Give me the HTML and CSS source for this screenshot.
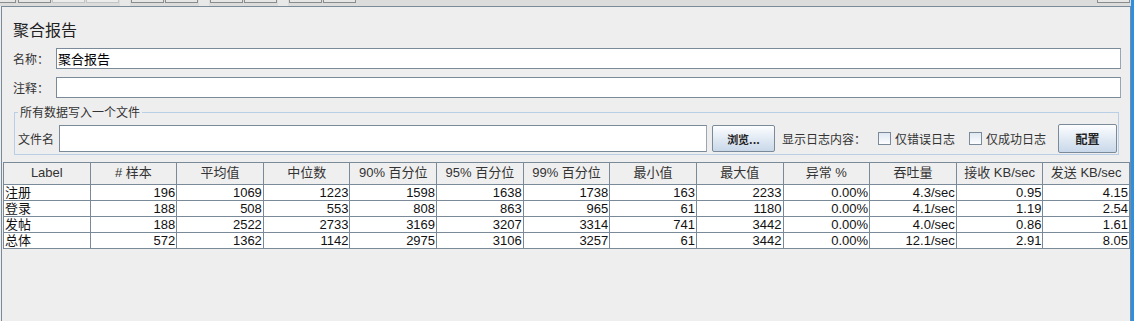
FILE: index.html
```html
<!DOCTYPE html>
<html lang="zh-CN">
<head>
  <meta charset="UTF-8" />
  <meta name="viewport" content="width=device-width, initial-scale=1.0"/>
  <title>聚合报告</title>
  <link rel="stylesheet" href="styles.css">
</head>
<body>
  <div class="frame">
    <div class="toolbar">
      <span class="tool-btn small"></span>
      <span class="tool-btn"></span>
      <span class="tool-btn faded"></span>
      <span class="tool-btn faded"></span>
      <span class="tool-sep"></span>
      <span class="tool-btn"></span>
      <span class="tool-btn"></span>
      <span class="tool-sep"></span>
      <span class="tool-btn"></span>
      <span class="tool-btn"></span>
      <span class="tool-sep"></span>
      <span class="tool-btn"></span>
      <span class="tool-btn"></span>
      <span class="tool-spacer"></span>
      <span class="tool-btn"></span>
    </div>

    <div class="panel">
      <h2 class="title">聚合报告</h2>

      <div class="field-row">
        <label class="field-label">名称：</label>
        <div class="text-input">聚合报告</div>
      </div>
      <div class="field-row comment-row">
        <label class="field-label">注释：</label>
        <div class="text-input"></div>
      </div>

      <fieldset class="file-box">
        <legend>所有数据写入一个文件</legend>
        <div class="file-row">
          <span class="file-label">文件名</span>
          <div class="text-input file-input"></div>
          <button class="btn browse-btn">浏览...</button>
          <span class="log-label">显示日志内容：</span>
          <span class="checkbox"></span>
          <span class="check-text">仅错误日志</span>
          <span class="checkbox second"></span>
          <span class="check-text">仅成功日志</span>
          <button class="btn config-btn">配置</button>
        </div>
      </fieldset>

      <div class="results" id="results"></div>
    </div>
  </div>

  <script>
    const headers = ['Label', '# 样本', '平均值', '中位数', '90% 百分位', '95% 百分位', '99% 百分位',
      '最小值', '最大值', '异常 %', '吞吐量', '接收 KB/sec', '发送 KB/sec'];

    const rows = [
      ['注册', '196', '1069', '1223', '1598', '1638', '1738', '163', '2233', '0.00%', '4.3/sec', '0.95', '4.15'],
      ['登录', '188', '508', '553', '808', '863', '965', '61', '1180', '0.00%', '4.1/sec', '1.19', '2.54'],
      ['发帖', '188', '2522', '2733', '3169', '3207', '3314', '741', '3442', '0.00%', '4.0/sec', '0.86', '1.61'],
      ['总体', '572', '1362', '1142', '2975', '3106', '3257', '61', '3442', '0.00%', '12.1/sec', '2.91', '8.05']
    ];

    const results = document.getElementById('results');

    headers.forEach(text => {
      const cell = document.createElement('div');
      cell.className = 'head-cell';
      cell.textContent = text;
      results.appendChild(cell);
    });

    rows.forEach(row => {
      row.forEach((text, i) => {
        const cell = document.createElement('div');
        cell.className = i === 0 ? 'cell label-cell' : 'cell';
        cell.textContent = text;
        results.appendChild(cell);
      });
    });
  </script>
</body>
</html>
```

FILE: styles.css
```css
body {
  margin: 0;
  width: 1134px;
  height: 321px;
  overflow: hidden;
  background: #eeeeee;
  font-family: 'Liberation Sans', 'Noto Sans CJK SC', sans-serif;
  font-size: 12px;
  color: #333;
}

.frame {
  display: flex;
  flex-direction: column;
  height: 321px;
  border-right: 3px solid #2d8fe0;
  box-sizing: border-box;
}

/* top strip: only the bottom edge of the toolbar buttons shows */
.toolbar {
  display: flex;
  height: 6px;
  background: #dcdcdc;
}

.tool-btn {
  width: 31px;
  height: 2px;
  margin-right: 1px;
  background: #e6e6e6;
  border: 1px solid #8c8c8c;
  border-top: none;
}

.tool-btn.small {
  width: 15px;
  margin-right: 2px;
  border-left: none;
}

.tool-btn.faded {
  border-color: #c4c4c4;
  background: #ececec;
}

.tool-sep {
  width: 10px;
  margin-right: 1px;
  background: #e8e8e8;
}

.tool-spacer {
  flex: 1;
}

.panel {
  flex: 1;
  margin-left: 1px;
  border: 1px solid #7a8a99;
  border-bottom: none;
  background: #eeeeee;
}

.title {
  margin: 0;
  padding: 12px 0 0 11px;
  font-family: 'Noto Sans CJK SC', sans-serif;
  font-size: 16px;
  font-weight: normal;
  line-height: 20px;
  color: #222;
}

.field-row {
  display: flex;
  align-items: center;
  margin-top: 9px;
  padding: 0 9px 0 11px;
}

.comment-row {
  margin-top: 8px;
}

.field-label {
  width: 43px;
  font-family: 'Noto Sans CJK SC', sans-serif;
  font-size: 12px;
}

.text-input {
  flex: 1;
  height: 21px;
  box-sizing: border-box;
  padding-left: 1px;
  background: #fff;
  border: 1px solid #7a8a99;
  border-right-color: #9aa6b2;
  font-family: 'Noto Sans CJK SC', sans-serif;
  font-size: 13px;
  line-height: 19px;
  color: #000;
}

.file-box {
  margin: 6px 11px 0 12px;
  padding: 4px 1px 1px 3px;
  border: 1px solid #b8cfe5;
}

.file-box legend {
  padding: 0 2px;
  font-family: 'Noto Sans CJK SC', sans-serif;
  font-size: 12px;
  line-height: 16px;
  color: #333;
}

.file-row {
  display: flex;
  align-items: center;
  height: 29px;
}

.file-label {
  width: 41px;
  font-family: 'Noto Sans CJK SC', sans-serif;
}

.file-input {
  flex: none;
  width: 648px;
  height: 27px;
}

.btn {
  padding: 0;
  border: 1px solid #7a8a99;
  border-radius: 2px;
  background: linear-gradient(#fdfeff, #e4ecf5 45%, #c9d8e9);
  font-family: 'Noto Sans CJK SC', sans-serif;
  color: #222;
}

.browse-btn {
  width: 63px;
  height: 27px;
  margin-left: 5px;
  font-size: 11px;
  font-weight: bold;
}

.log-label {
  margin-left: 7px;
  width: 96px;
  font-family: 'Noto Sans CJK SC', sans-serif;
}

.checkbox {
  width: 11px;
  height: 11px;
  border: 1px solid #7a8a99;
  background: linear-gradient(#dfe8f2, #fdfeff);
}

.checkbox.second {
  margin-left: 14px;
}

.check-text {
  margin-left: 4px;
  font-family: 'Noto Sans CJK SC', sans-serif;
}

.config-btn {
  width: 59px;
  height: 29px;
  margin-left: auto;
  font-size: 12px;
  font-weight: bold;
}

.results {
  display: grid;
  grid-template-columns: repeat(13, 1fr);
  grid-template-rows: 22px repeat(4, 16px);
  width: 1127px;
  box-sizing: border-box;
  margin: 7px 0 0 1px;
  border-left: 1px solid #7a8a99;
  border-top: 1px solid #7a8a99;
}

.head-cell,
.cell {
  box-sizing: border-box;
  border-right: 1px solid #7a8a99;
  border-bottom: 1px solid #7a8a99;
  overflow: hidden;
  white-space: nowrap;
}

.head-cell {
  background: #efefef;
  text-align: center;
  font-size: 13px;
  line-height: 20px;
  color: #333;
}

.cell {
  background: #fff;
  text-align: right;
  padding-right: 1px;
  font-size: 13px;
  line-height: 15px;
  color: #111;
}

.label-cell {
  text-align: left;
  padding-left: 1px;
}
```
